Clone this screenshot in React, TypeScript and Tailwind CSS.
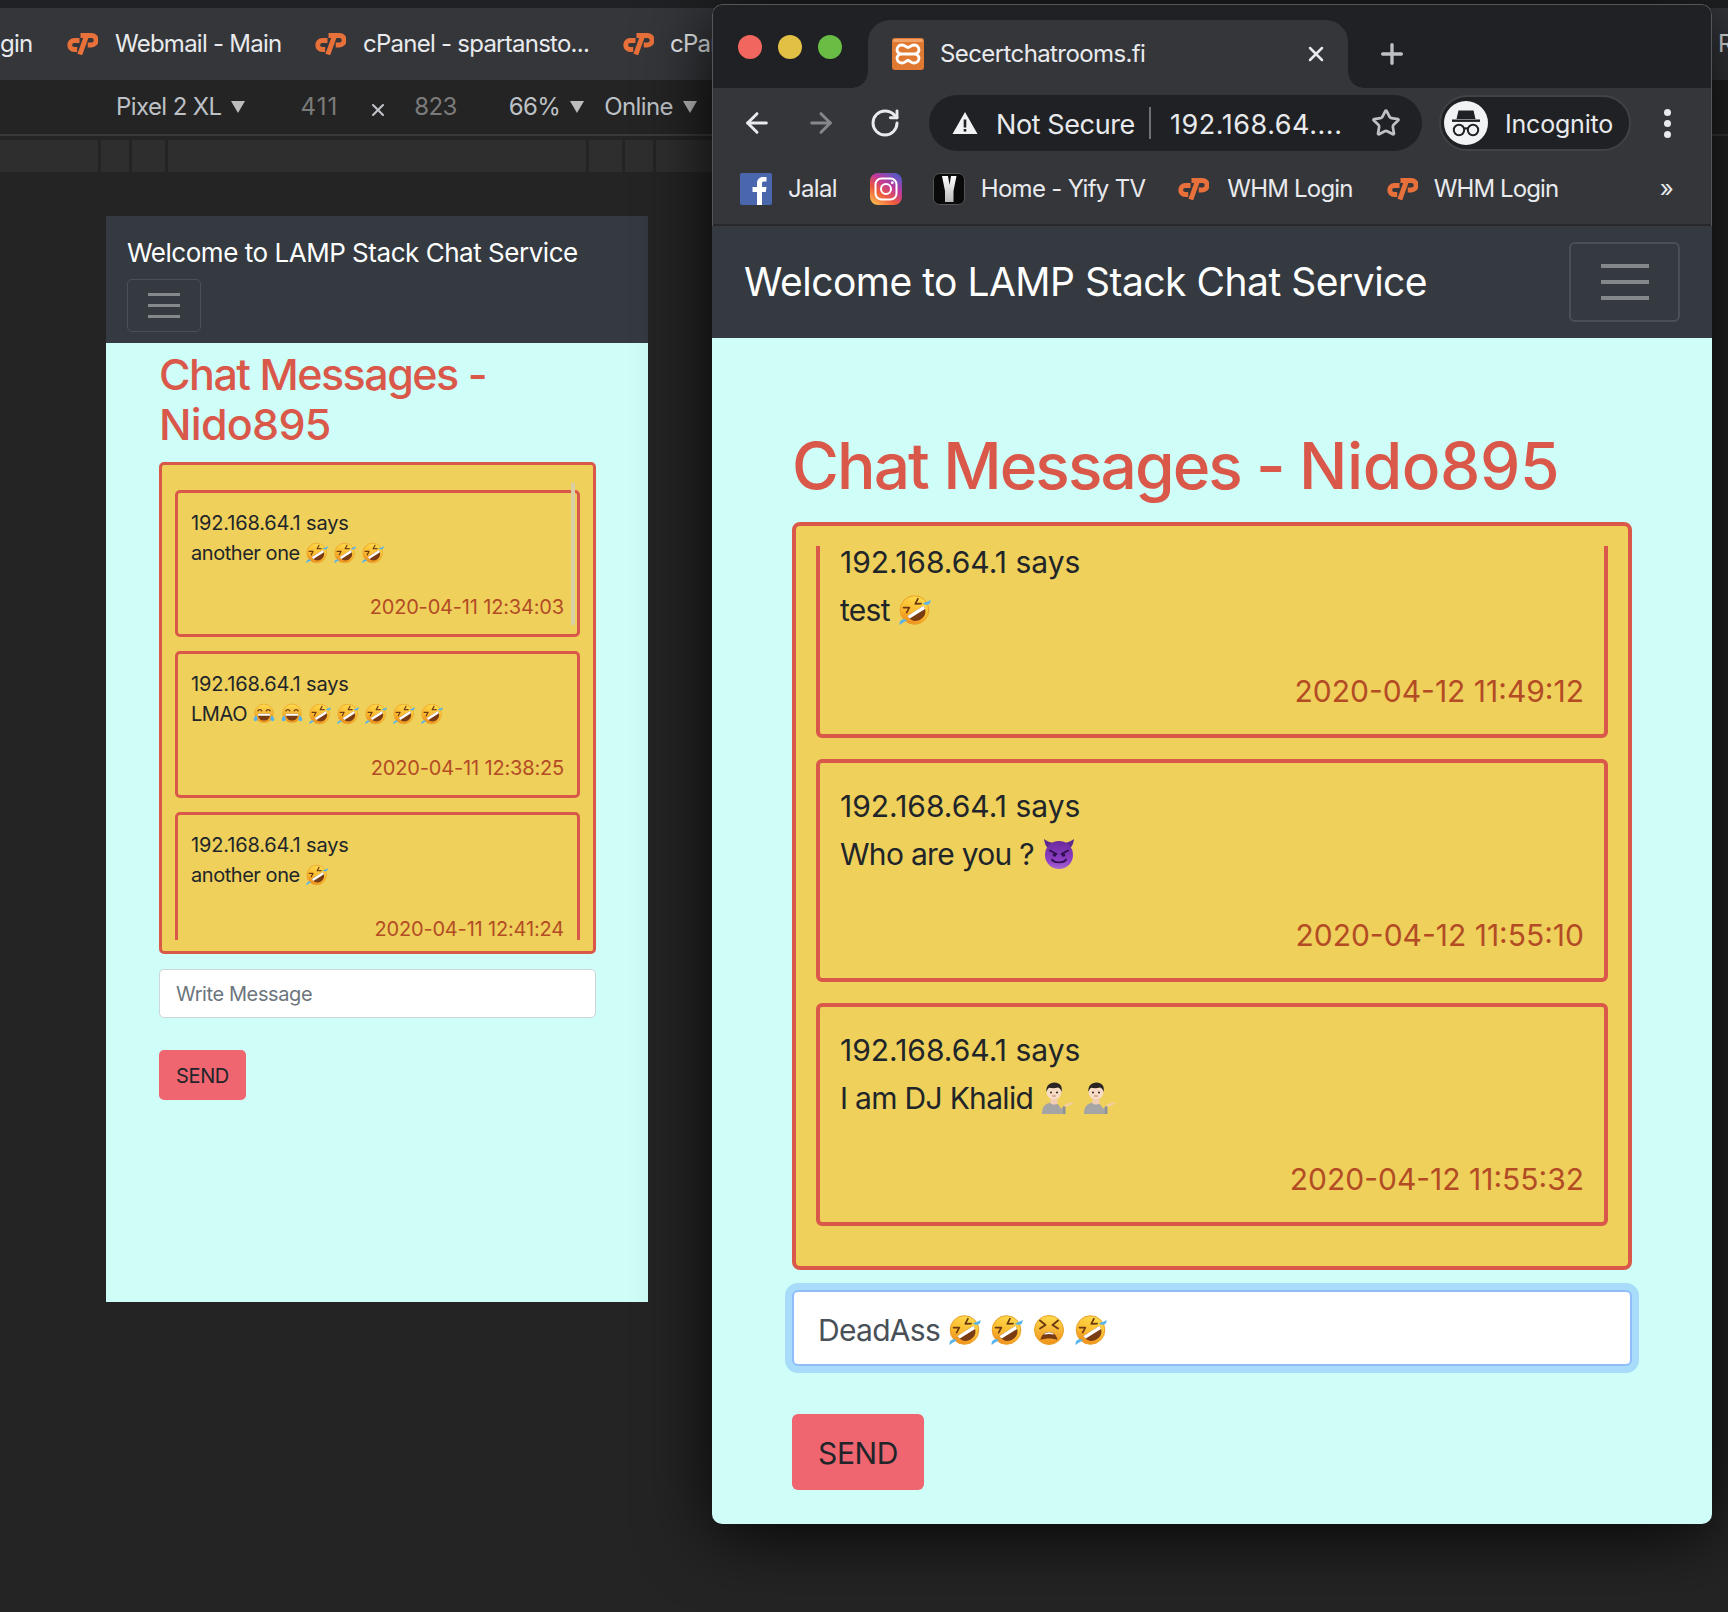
import React, { useId } from 'react'
import { ArrowLeft, ArrowRight, Plus, RotateCw, Star, X } from 'lucide-react'

type EmojiName = 'rofl' | 'joy' | 'devil' | 'shrug' | 'tired'

const Rofl = ({ size }: { size: number }) => {
  const id = useId()
  return (
    <svg width={size} height={size} viewBox="0 0 32 32" className="shrink-0">
      <defs>
        <linearGradient id={id} x1="0.7" y1="0" x2="0.3" y2="1">
          <stop offset="0" stopColor="#ffdc4e" />
          <stop offset="0.6" stopColor="#fbb92e" />
          <stop offset="1" stopColor="#ee8a1c" />
        </linearGradient>
      </defs>
      <circle cx="15.500" cy="16" r="14.300" fill={`url(#${id})`} stroke="#e9a028" strokeWidth="1" />
      <g transform="rotate(-32 16 16)">
        <path d="M6.500 17h19c0 6.500-4 10-9.500 10s-9.500-3.500-9.500-10z" fill="#7a3c12" />
        <path d="M6.500 17h19c0 1.300-.2 2.500-.5 3.500H7c-.3-1-.5-2.200-.5-3.500z" fill="#fff" />
        <path d="M7.500 8l5 2.900-5 2.900M24.500 8l-5 2.900 5 2.900" fill="none" stroke="#6b3a10" strokeWidth="1.700" strokeLinecap="round" strokeLinejoin="round" />
      </g>
      <path d="M31.500 6c.4 2.400-.7 4.200-2.700 4.700-2 .5-3.600-.2-4.800-1.800 2.400-.2 4.700-1.100 7.500-2.900z" fill="#58b4ec" />
      <path d="M.7 31c-.6-2.300.4-4.400 2.300-5.200 1.900-.8 3.500-.5 5 .9-2.300.6-4.700 2.100-7.300 4.300z" fill="#58b4ec" />
    </svg>
  )
}

const Joy = ({ size }: { size: number }) => {
  const id = useId()
  return (
    <svg width={size} height={size} viewBox="0 0 32 32" className="shrink-0">
      <defs>
        <linearGradient id={id} x1="0" y1="0" x2="0" y2="1">
          <stop offset="0" stopColor="#ffdc4e" />
          <stop offset="1" stopColor="#ef921d" />
        </linearGradient>
      </defs>
      <circle cx="16" cy="15" r="13.500" fill={`url(#${id})`} stroke="#e9a028" strokeWidth="1" />
      <path d="M7 15.500h18c0 6.500-4 10-9 10s-9-3.500-9-10z" fill="#7a3c12" />
      <path d="M7 15.500h18l-.4 3.200H7.400z" fill="#fff" />
      <path d="M7 11.500c1-2.600 4.800-2.600 5.800 0M19.200 11.500c1-2.600 4.800-2.600 5.800 0" fill="none" stroke="#6b3a10" strokeWidth="1.800" strokeLinecap="round" />
      <path d="M5 18c-2.800 1.800-4.200 4-4 6.500.3 2.300 4.300 2.700 5.300.4.700-1.900 0-4.200-1.300-6.900z" fill="#58b4ec" />
      <path d="M27 18c2.800 1.800 4.200 4 4 6.500-.3 2.300-4.300 2.700-5.300.4-.7-1.900 0-4.200 1.300-6.900z" fill="#58b4ec" />
    </svg>
  )
}

const Tired = ({ size }: { size: number }) => {
  const id = useId()
  return (
    <svg width={size} height={size} viewBox="0 0 32 32" className="shrink-0">
      <defs>
        <linearGradient id={id} x1="0" y1="0" x2="0" y2="1">
          <stop offset="0" stopColor="#ffdc4e" />
          <stop offset="1" stopColor="#ef921d" />
        </linearGradient>
      </defs>
      <circle cx="16" cy="16" r="14.500" fill={`url(#${id})`} stroke="#e9a028" strokeWidth="1" />
      <path d="M7 6.500l5.500 4.500-5.500 3.500M25 6.500L19.500 11l5.500 3.500" fill="none" stroke="#6b3a10" strokeWidth="1.900" strokeLinecap="round" strokeLinejoin="round" />
      <path d="M7.500 26c1-5.500 4.500-8 8.500-8s7.500 2.500 8.500 8c-2.500-1-5.500-1.500-8.500-1.500S10 25 7.500 26z" fill="#7a3c12" />
      <path d="M10.500 20.500c1.500-1.500 3.500-2.200 5.500-2.200s4 .7 5.500 2.200c-3.500-.8-7.500-.8-11 0z" fill="#fff" />
    </svg>
  )
}

const Devil = ({ size }: { size: number }) => {
  const id = useId()
  return (
    <svg width={size} height={size} viewBox="0 0 32 32" className="shrink-0">
      <defs>
        <linearGradient id={id} x1="0" y1="0" x2="0" y2="1">
          <stop offset="0" stopColor="#6a2a9e" />
          <stop offset="0.7" stopColor="#8e3fc4" />
          <stop offset="1" stopColor="#a569d0" />
        </linearGradient>
      </defs>
      <path d="M1 1c.5 4.500 2 8 5 10l5-6C7.500 4.500 4 3.500 1 1zM31 1c-.5 4.500-2 8-5 10l-5-6c3.500-.5 7-1.500 10-4z" fill="#5e2a90" />
      <circle cx="16" cy="17" r="14" fill={`url(#${id})`} />
      <path d="M7 12.500l6.500 3.500M25 12.500L18.500 16" stroke="#2f0f52" strokeWidth="1.800" strokeLinecap="round" />
      <circle cx="11.500" cy="17" r="1.800" fill="#2f0f52" />
      <circle cx="20.500" cy="17" r="1.800" fill="#2f0f52" />
      <path d="M9 21.500c2 3.800 12 3.800 14 0" fill="none" stroke="#2f0f52" strokeWidth="1.800" strokeLinecap="round" />
    </svg>
  )
}

const Shrug = ({ size }: { size: number }) => (
  <svg width={size} height={size} viewBox="0 0 32 32" className="shrink-0">
    <path d="M0 32c0-6 2-9 5.500-10.500 3-1.200 6-1.200 9 0 2.500 1 3.500 3 4 5l3-1.500V32z" fill="#a5a5a5" />
    <path d="M21 32v-8l2.500.5V32z" fill="#8d9296" />
    <path d="M21.500 24c2-2.300 5.500-3.500 10-3.500-.5 1.500-3.500 3.200-7.500 4z" fill="#f3cfa8" />
    <circle cx="12" cy="10" r="7.500" fill="#f8dcc6" />
    <path d="M4.500 10c-.8-6 3-9.500 8-9.500s8.500 3.500 7 9.500c-.6-2.500-1.800-4-3.500-4.500-3 .8-6.500.8-8.800.2-1.400.9-2.200 2.300-2.700 4.300z" fill="#2a2522" />
    <circle cx="9" cy="10.500" r="1" fill="#2a2522" />
    <circle cx="15" cy="10.500" r="1" fill="#2a2522" />
    <path d="M10.500 14h3" stroke="#b67f6e" strokeWidth="1" strokeLinecap="round" />
    <path d="M8.500 17h7v4.500c-2 1.500-5 1.500-7 0z" fill="#f1cdb6" />
  </svg>
)

const Emoji = ({ name, size }: { name: EmojiName; size: number }) => {
  if (name === 'rofl') return <Rofl size={size} />
  if (name === 'joy') return <Joy size={size} />
  if (name === 'devil') return <Devil size={size} />
  if (name === 'tired') return <Tired size={size} />
  return <Shrug size={size} />
}

const CpLogo = () => (
  <svg width="32" height="22" viewBox="0 0 32 22" fill="none" stroke="#e8703a" className="shrink-0">
    <path d="M13.500 7.500H8.200a4.500 4.500 0 0 0 0 9h3" strokeWidth="4.800" />
    <path d="M14.500 2.500h11a4.600 4.600 0 0 1 0 9.400h-3.800" strokeWidth="5" />
    <path d="M20.500 3L13.800 21.500" strokeWidth="5" />
  </svg>
)

const XamppIcon = () => (
  <svg width="32" height="32" viewBox="0 0 32 32" className="shrink-0">
    <rect width="32" height="32" rx="3" fill="#e07a32" />
    <rect x="1" y="1" width="30" height="3" rx="1.500" fill="#f0a267" />
    <path d="M10 7C6 7 5 10 5 12c0 2 2 3.500 4 4-2 .5-4 2-4 4 0 2 1 5 5 5 3 0 4-2.500 6-2.500s3 2.500 6 2.500c4 0 5-3 5-5 0-2-2-3.500-4-4 2-.5 4-2 4-4 0-2-1-5-5-5-3 0-4 2.500-6 2.500S13 7 10 7zM9 16h14" fill="none" stroke="#fff" strokeWidth="2.800" />
  </svg>
)

const FacebookIcon = () => (
  <svg width="32" height="32" viewBox="0 0 32 32" className="shrink-0">
    <rect width="32" height="32" rx="2" fill="#4a67ad" />
    <path d="M17 32V19h-4.500v-5H17v-3.500C17 6.500 19.500 4 23 4h3.500v4.500H24c-1.500 0-2 .8-2 2V14h4.500l-.7 5H22v13z" fill="#fff" />
  </svg>
)

const InstagramIcon = () => {
  const id = useId()
  return (
    <svg width="32" height="32" viewBox="0 0 32 32" className="shrink-0">
      <defs>
        <linearGradient id={id} x1="0.1" y1="1" x2="0.8" y2="0">
          <stop offset="0" stopColor="#fdc04f" />
          <stop offset="0.35" stopColor="#ee5a3c" />
          <stop offset="0.65" stopColor="#bf3a9a" />
          <stop offset="1" stopColor="#5459c9" />
        </linearGradient>
      </defs>
      <rect width="32" height="32" rx="8" fill={`url(#${id})`} />
      <rect x="5.500" y="5.500" width="21" height="21" rx="6" fill="none" stroke="#fff" strokeWidth="2" />
      <circle cx="16" cy="16" r="5" fill="none" stroke="#fff" strokeWidth="2" />
      <circle cx="22.300" cy="9.700" r="1.400" fill="#fff" />
    </svg>
  )
}

const YifyIcon = () => {
  const id = useId()
  return (
    <svg width="32" height="32" viewBox="0 0 32 32" className="shrink-0">
      <defs>
        <linearGradient id={id} x1="0" y1="0" x2="0" y2="1">
          <stop offset="0" stopColor="#fff" />
          <stop offset="1" stopColor="#bbb" />
        </linearGradient>
      </defs>
      <rect x="0.500" y="0.500" width="31" height="31" rx="6" fill="#0a0a0a" stroke="#555" />
      <path d="M9 3h6l1.500 9L18 3h5.500l-3 15v11H12V18z" fill={`url(#${id})`} />
    </svg>
  )
}

const IncognitoIcon = () => (
  <svg width="44" height="44" viewBox="0 0 44 44" className="shrink-0">
    <circle cx="22" cy="22" r="22" fill="#f1f3f4" />
    <path d="M14.500 9.500h15l2 8.500h-19z" fill="#202124" />
    <rect x="8" y="18.500" width="28" height="2.400" fill="#202124" />
    <circle cx="15" cy="29" r="5.200" fill="none" stroke="#202124" strokeWidth="2" />
    <circle cx="29" cy="29" r="5.200" fill="none" stroke="#202124" strokeWidth="2" />
    <path d="M20 28c1.500-1 2.500-1 4 0" fill="none" stroke="#202124" strokeWidth="2" />
  </svg>
)

const WarningIcon = () => (
  <svg width="26" height="24" viewBox="0 0 26 24" className="shrink-0">
    <path d="M13 1L25.500 23H.5z" fill="#f1f3f4" />
    <rect x="11.700" y="8.500" width="2.600" height="8" fill="#202124" />
    <rect x="11.700" y="18" width="2.600" height="2.600" fill="#202124" />
  </svg>
)

const Bars = ({ large }: { large: boolean }) => (
  <div className={large ? 'flex w-[48px] flex-col gap-[12px]' : 'flex w-[32px] flex-col gap-[8px]'}>
    <span className={large ? 'h-[4px] bg-[#85888b]' : 'h-[3px] bg-[#85888b]'} />
    <span className={large ? 'h-[4px] bg-[#85888b]' : 'h-[3px] bg-[#85888b]'} />
    <span className={large ? 'h-[4px] bg-[#85888b]' : 'h-[3px] bg-[#85888b]'} />
  </div>
)

type Msg = { text: string; emoji: EmojiName[]; date: string }

const phoneMsgs: Msg[] = [
  { text: 'another one', emoji: ['rofl', 'rofl', 'rofl'], date: '2020-04-11 12:34:03' },
  { text: 'LMAO', emoji: ['joy', 'joy', 'rofl', 'rofl', 'rofl', 'rofl', 'rofl'], date: '2020-04-11 12:38:25' },
  { text: 'another one', emoji: ['rofl'], date: '2020-04-11 12:41:24' },
]

const desktopMsgs: Msg[] = [
  { text: 'test', emoji: ['rofl'], date: '2020-04-12 11:49:12' },
  { text: 'Who are you ?', emoji: ['devil'], date: '2020-04-12 11:55:10' },
  { text: 'I am DJ Khalid', emoji: ['shrug', 'shrug'], date: '2020-04-12 11:55:32' },
]

const PhoneCard = ({ msg }: { msg: Msg }) => (
  <div className="h-[147px] shrink-0 rounded-[5px] border-[3px] border-[#d9584a] px-[13px] pt-[14px] text-[#212529]">
    <p className="text-[20px] leading-[32px] tracking-[-0.15px]">192.168.64.1 says</p>
    <div className="-mt-[2px] flex h-[32px] items-center text-[20px] tracking-[-0.45px]">
      <span className="mr-[6px]">{msg.text}</span>
      <span className="flex items-center gap-[6px]">
        {msg.emoji.map((e, i) => <Emoji key={i} name={e} size={22} />)}
      </span>
    </div>
    <p className="mt-[22px] text-right text-[20px] leading-[32px] tracking-[-0.17px] text-[#b34c25]">{msg.date}</p>
  </div>
)

const DesktopCard = ({ msg, first }: { msg: Msg; first?: boolean }) => (
  <div className={first ? '-mt-[31px] h-[223px] shrink-0 rounded-[6px] border-4 border-[#d9584a] pl-[20px] pr-[20px] pt-[19px] text-[#212529]' : 'h-[223px] shrink-0 rounded-[6px] border-4 border-[#d9584a] pl-[20px] pr-[20px] pt-[19px] text-[#212529]'}>
    <p className="text-[30px] leading-[48px]">192.168.64.1 says</p>
    <div className="flex h-[48px] items-center text-[30px] tracking-[-0.7px]">
      <span className="mr-[9px]">{msg.text}</span>
      <span className="flex items-center gap-[10px]">
        {msg.emoji.map((e, i) => <Emoji key={i} name={e} size={32} />)}
      </span>
    </div>
    <p className="mt-[33px] text-right text-[30px] leading-[48px] text-[#b34c25]">{msg.date}</p>
  </div>
)

export default function App() {
  return (
    <div className="relative h-[1612px] w-[1728px] overflow-hidden bg-[#242424] [font-family:Inter,sans-serif]">
      {/* devtools behind */}
      <div className="h-[8px] bg-[#202124]" />
      <div className="flex h-[72px] items-center bg-[#35363a] text-[24px] tracking-[-0.75px] text-[#e8eaed]">
        <span className="w-[66px]">gin</span>
        <CpLogo />
        <span className="ml-[17px] w-[199px]">Webmail - Main</span>
        <CpLogo />
        <span className="ml-[17px] w-[259px]">cPanel - spartansto...</span>
        <CpLogo />
        <span className="ml-[16px]">cPanel</span>
        <span className="ml-auto w-[10px] overflow-hidden">R</span>
      </div>
      <div className="flex h-[54px] items-center pl-[116px] text-[24px] tracking-[-0.6px] text-[#bdc1c6]">
        <span>Pixel 2 XL</span>
        <span className="ml-[9px] h-0 w-0 border-x-[7px] border-t-[12px] border-x-transparent border-t-[#bdbdbd]" />
        <span className="ml-[56px] tracking-[1px] text-[#7b7b7b]">411</span>
        <X size={20} strokeWidth={2.5} className="ml-[30px] mt-[6px] text-[#bdc1c6]" />
        <span className="ml-[26px] text-[#7b7b7b]">823</span>
        <span className="ml-[52px]">66%</span>
        <span className="ml-[10px] h-0 w-0 border-x-[7px] border-t-[12px] border-x-transparent border-t-[#bdbdbd]" />
        <span className="ml-[20px]">Online</span>
        <span className="ml-[10px] h-0 w-0 border-x-[7px] border-t-[12px] border-x-transparent border-t-[#bdbdbd]" />
      </div>
      <div className="h-[2px] bg-[#3a3a3a]" />
      <div className="mt-[4px] flex h-[32px] gap-[3px]">
        <div className="w-[98px] bg-[#2e2e2e]" />
        <div className="w-[28px] bg-[#2e2e2e]" />
        <div className="w-[33px] bg-[#2e2e2e]" />
        <div className="w-[418px] bg-[#2e2e2e]" />
        <div className="w-[33px] bg-[#2e2e2e]" />
        <div className="w-[28px] bg-[#2e2e2e]" />
        <div className="w-[60px] bg-[#2e2e2e]" />
      </div>

      {/* phone preview */}
      <div className="ml-[106px] mt-[44px] h-[1086px] w-[542px] bg-[#cffdf7]">
        <div className="h-[127px] bg-[#343a40] px-[21px] pt-[21px]">
          <div className="text-[26px] leading-[32px] tracking-[-0.47px] text-white">Welcome to LAMP Stack Chat Service</div>
          <div className="mt-[10px] flex h-[53px] w-[74px] items-center justify-center rounded-[5px] border border-[#4b5056]">
            <Bars large={false} />
          </div>
        </div>
        <div className="pl-[53px] pr-[52px] pt-[6px]">
          <h1 className="text-[43px] font-medium leading-[50px] text-[#d9584a]">
            <span className="tracking-[-1.5px]">Chat Messages -</span><br />
            <span className="tracking-[-0.7px]">Nido895</span>
          </h1>
          <div className="relative mt-[13px] h-[492px] rounded-[5px] border-[3px] border-[#d9584a] bg-[#eed05b] px-[13px] pt-[18px]">
            <div className="flex h-[457px] flex-col gap-[14px] overflow-hidden pt-[7px]">
              {phoneMsgs.map((m, i) => <PhoneCard key={i} msg={m} />)}
            </div>
            <span className="absolute right-[18px] top-[18px] h-[142px] w-[4px] bg-[#d9cfa5]" />
          </div>
          <div className="mt-[15px] flex h-[49px] items-center rounded-[5px] border border-[#ced4da] bg-white px-[16px] text-[20px] tracking-[-0.4px] text-[#6c757d]">Write Message</div>
          <button className="mt-[32px] h-[50px] w-[87px] rounded-[5px] bg-[#ef6671] pt-[2px] text-[20px] tracking-[-0.4px] text-[#212529]">SEND</button>
        </div>
      </div>

      {/* browser window over the devtools */}
      <div className="absolute left-[712px] top-[4px] h-[1520px] w-[1000px] overflow-hidden rounded-[10px] bg-[#202124] shadow-[0_10px_70px_rgba(0,0,0,0.85)]">
        <div className="rounded-t-[10px] border-x border-t border-[#55565a]">
          <div className="flex h-[83px] items-end">
            <div className="mb-[29px] ml-[25px] flex gap-[16px]">
              <span className="h-[24px] w-[24px] rounded-full bg-[#f1665e]" />
              <span className="h-[24px] w-[24px] rounded-full bg-[#e2c044]" />
              <span className="h-[24px] w-[24px] rounded-full bg-[#69bd44]" />
            </div>
            <div className="relative ml-[26px] flex h-[68px] w-[480px] items-center rounded-t-[22px] bg-[#35363a] pl-[24px] pr-[20px]">
              <span className="absolute -left-[16px] bottom-0 h-[16px] w-[16px] bg-[radial-gradient(circle_at_0_0,transparent_15.500px,#35363a_16px)]" />
              <span className="absolute -right-[16px] bottom-0 h-[16px] w-[16px] bg-[radial-gradient(circle_at_100%_0,transparent_15.500px,#35363a_16px)]" />
              <XamppIcon />
              <span className="ml-[16px] text-[24px] tracking-[-0.6px] text-[#e8eaed]">Secertchatrooms.fi</span>
              <X size={24} strokeWidth={2.5} className="ml-auto text-[#e8eaed]" />
            </div>
            <Plus size={32} strokeWidth={2.5} className="mb-[18px] ml-[28px] text-[#bdc1c6]" />
          </div>
          <div className="flex h-[70px] items-center bg-[#35363a] pl-[28px]">
            <ArrowLeft size={32} strokeWidth={2.2} className="text-[#e8eaed]" />
            <ArrowRight size={32} strokeWidth={2.2} className="ml-[32px] text-[#85878a]" />
            <RotateCw size={32} strokeWidth={2.2} className="ml-[32px] text-[#e8eaed]" />
            <div className="ml-[28px] flex h-[56px] w-[493px] items-center rounded-full bg-[#202124] pl-[23px] text-[#e8eaed]">
              <WarningIcon />
              <span className="ml-[18px] mt-[4px] text-[27px] tracking-[-0.4px]">Not Secure</span>
              <span className="ml-[14px] h-[32px] w-[2px] bg-[#6f7175]" />
              <span className="ml-[19px] mt-[4px] text-[27px] tracking-[0.55px]">192.168.64....</span>
              <Star size={30} strokeWidth={2.2} className="ml-[28px] text-[#bdc1c6]" />
            </div>
            <div className="ml-[17px] flex h-[56px] w-[192px] items-center rounded-full border-2 border-[#414246] bg-[#202124] pl-[3px] text-[#e8eaed]">
              <IncognitoIcon />
              <span className="ml-[17px] mt-[4px] text-[25px] tracking-[-0.2px]">Incognito</span>
            </div>
            <div className="ml-[33px] flex flex-col gap-[4px]">
              <span className="h-[7px] w-[7px] rounded-full bg-[#e8eaed]" />
              <span className="h-[7px] w-[7px] rounded-full bg-[#e8eaed]" />
              <span className="h-[7px] w-[7px] rounded-full bg-[#e8eaed]" />
            </div>
          </div>
          <div className="flex h-[68px] items-center border-b-2 border-[#27282b] bg-[#35363a] pb-[5px] pl-[27px] text-[24px] tracking-[-0.7px] text-[#e8eaed]">
            <FacebookIcon />
            <span className="ml-[16px]">Jalal</span>
            <span className="ml-[33px]"><InstagramIcon /></span>
            <span className="ml-[31px]"><YifyIcon /></span>
            <span className="ml-[16px]">Home - Yify TV</span>
            <span className="ml-[32px]"><CpLogo /></span>
            <span className="ml-[18px] tracking-[-0.8px]">WHM Login</span>
            <span className="ml-[33px]"><CpLogo /></span>
            <span className="ml-[16px] tracking-[-0.9px]">WHM Login</span>
            <span className="ml-auto mr-[38px]">»</span>
          </div>
        </div>
        <div className="flex h-[112px] items-center justify-between bg-[#343a40] pl-[32px] pr-[32px]">
          <span className="text-[39px] tracking-[-0.5px] text-white">Welcome to LAMP Stack Chat Service</span>
          <div className="flex h-[80px] w-[111px] items-center justify-center rounded-[6px] border-2 border-[#4b5056]">
            <Bars large />
          </div>
        </div>
        <div className="h-[1186px] bg-[#cffdf7] px-[80px] pt-[92px]">
          <h1 className="text-[64px] font-medium leading-[72px] text-[#d9584a]">
            <span className="tracking-[-1.9px]">Chat Messages - </span>
            <span className="tracking-[-0.4px]">Nido895</span>
          </h1>
          <div className="mt-[20px] h-[748px] rounded-[8px] border-4 border-[#d9584a] bg-[#eed05b] px-[20px] pt-[20px]">
            <div className="flex h-[700px] flex-col gap-[21px] overflow-hidden">
              {desktopMsgs.map((m, i) => <DesktopCard key={i} msg={m} first={i === 0} />)}
            </div>
          </div>
          <div className="mt-[20px] flex h-[76px] items-center rounded-[6px] border-2 border-[#8fbdf8] bg-white pl-[24px] pt-[4px] text-[30px] tracking-[-0.7px] text-[#495057] shadow-[0_0_0_7px_#a9dcfb]">
            <span className="mr-[9px]">DeadAss</span>
            <span className="flex items-center gap-[10px]">
              <Emoji name="rofl" size={32} />
              <Emoji name="rofl" size={32} />
              <Emoji name="tired" size={32} />
              <Emoji name="rofl" size={32} />
            </span>
          </div>
          <button className="mt-[48px] h-[76px] w-[132px] rounded-[6px] bg-[#ef6671] pt-[2px] text-[30px] tracking-[-0.4px] text-[#212529]">SEND</button>
        </div>
      </div>
    </div>
  )
}
